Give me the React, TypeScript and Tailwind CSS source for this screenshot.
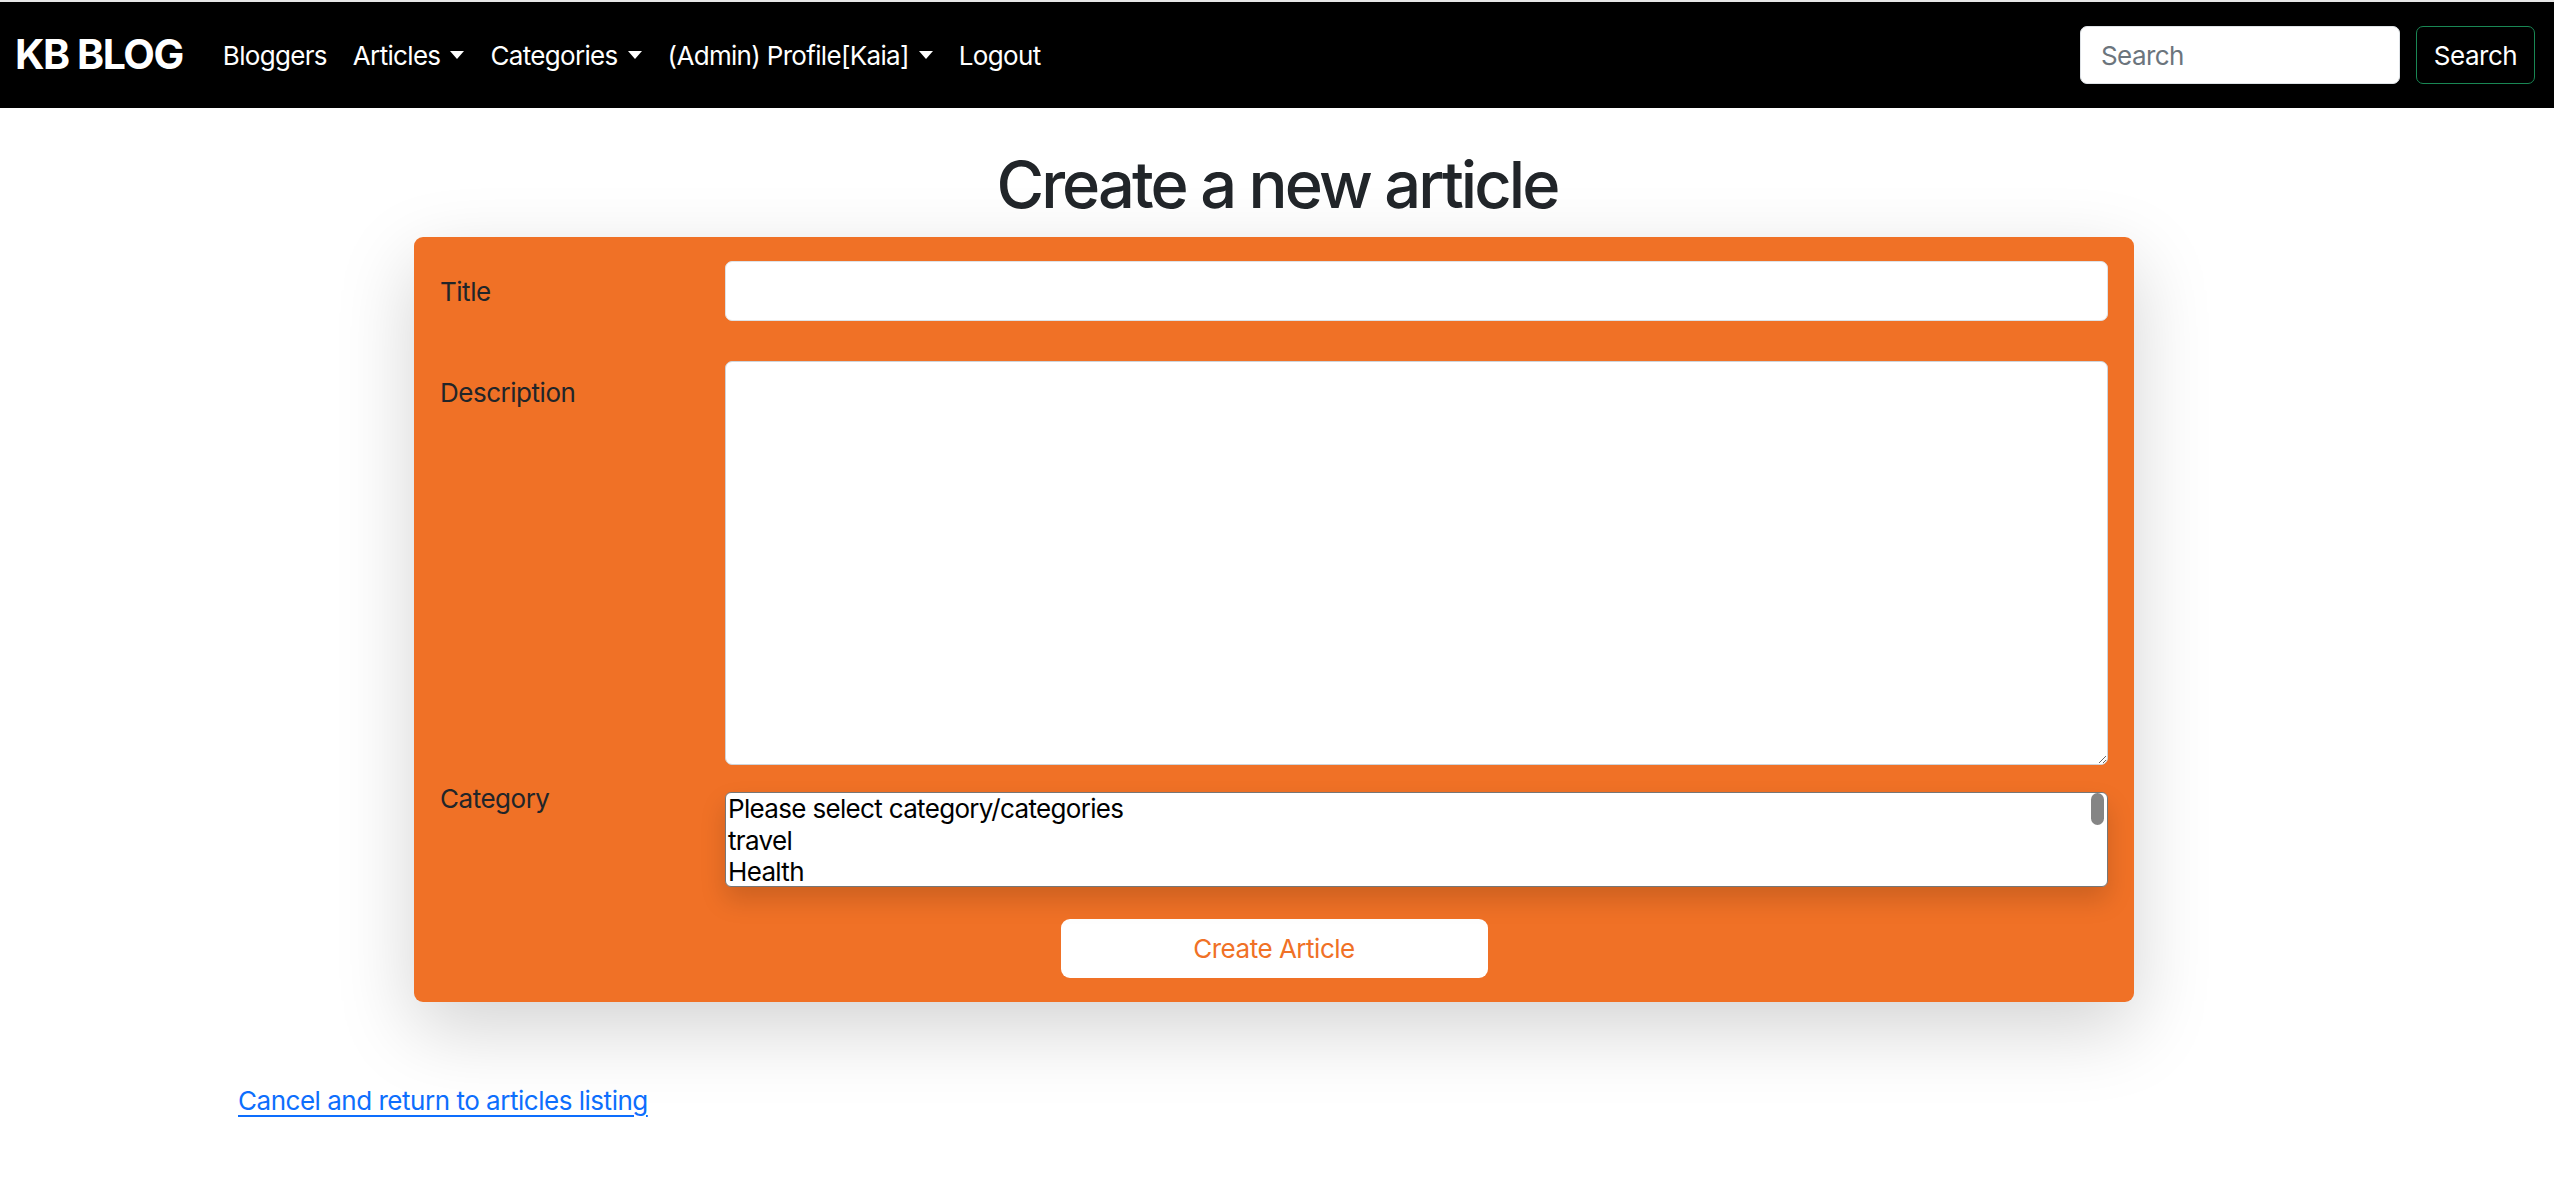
import React from "react";

const navLinks: { label: string; dropdown: boolean }[] = [
  { label: "Bloggers", dropdown: false },
  { label: "Articles", dropdown: true },
  { label: "Categories", dropdown: true },
  { label: "(Admin) Profile[Kaia]", dropdown: true },
  { label: "Logout", dropdown: false },
];

const categories = ["Please select category/categories", "travel", "Health"];

// small triangle like bootstrap's dropdown-toggle::after
const Caret = () => (
  <span className="ml-[10px] inline-block h-0 w-0 border-x-[7px] border-t-[8px] border-x-transparent border-t-white align-middle" />
);

const Navbar = () => {
  return (
    <nav className="flex h-[106px] items-center justify-between bg-black pl-[15px] pr-[19px]">
      <div className="flex items-center">
        <a className="mr-[27px] text-[41px] font-bold tracking-[-0.035em] text-white">
          KB BLOG
        </a>
        {navLinks.map((link) => (
          <a
            key={link.label}
            className="flex items-center px-[13px] text-[26px] leading-[39px] tracking-[-0.026em] text-white"
          >
            {link.label}
            {link.dropdown && <Caret />}
          </a>
        ))}
      </div>
      <form className="flex items-center gap-[16px]">
        <input
          type="search"
          placeholder="Search"
          className="h-[58px] w-[320px] rounded-[7px] border border-[#dee2e6] bg-white px-[20px] text-[26px] tracking-[-0.022em] text-[#212529] outline-none placeholder:text-[#6c757d]"
        />
        <button
          type="button"
          className="h-[58px] w-[119px] rounded-[7px] border-[1.6px] border-[#198754] text-[26px] text-white"
        >
          Search
        </button>
      </form>
    </nav>
  );
};

const ArticleForm = () => {
  return (
    <div className="ml-[414px] w-[1720px] rounded-[9px] bg-[#f07126] px-[26px] pb-[24px] pt-[24px] shadow-[0_26px_78px_rgba(0,0,0,0.175)]">
      {/* Title */}
      <div className="flex items-center">
        <label className="w-[285px] text-[26px] leading-[39px] text-[#212529]">
          Title
        </label>
        <input
          type="text"
          className="h-[60px] flex-1 rounded-[7px] border border-[#dee2e6] bg-white px-[20px] text-[26px] outline-none"
        />
      </div>

      {/* Description */}
      <div className="mt-[40px] flex items-start">
        <label className="w-[285px] pt-[12px] text-[26px] leading-[39px] text-[#212529]">
          Description
        </label>
        <textarea className="h-[404px] flex-1 resize-y rounded-[7px] border border-[#ced4da] bg-white px-[20px] py-[10px] text-[26px] outline-none" />
      </div>

      {/* Category */}
      <div className="mt-[14px] flex items-start">
        <label className="w-[285px] text-[26px] leading-[39px] text-[#212529]">
          Category
        </label>
        <div className="relative mt-[13px] h-[95px] flex-1 overflow-hidden rounded-[6px] border-[1.5px] border-[#767676] bg-white pl-[2px] tracking-[-0.042em] shadow-[0_13px_26px_rgba(0,0,0,0.15)]">
          {categories.map((c) => (
            <div key={c} className="text-[26px] leading-[31.5px] text-black">
              {c}
            </div>
          ))}
          <span className="absolute right-[3px] top-0 h-[32px] w-[13px] rounded-full bg-[#858585]" />
        </div>
      </div>

      <div className="mt-[32px] flex justify-center">
        <button
          type="button"
          className="h-[59px] w-[427px] rounded-[9px] bg-white text-[26px] text-[#f07126]"
        >
          Create Article
        </button>
      </div>
    </div>
  );
};

export default function App() {
  return (
    <div className="min-h-[1194px] w-full bg-white font-['Inter','Liberation_Sans',sans-serif] tracking-[-0.03em]">
      <div className="h-[2px] bg-[#e6e6e6]" />
      <Navbar />
      <h1 className="mb-[13px] mt-[38px] text-center text-[65px] font-medium leading-[1.2] tracking-[-0.045em] text-[#212529]">
        Create a new article
      </h1>
      <ArticleForm />
      <div className="ml-[238px] mt-[79px]">
        <a className="text-[26px] leading-[39px] text-[#0d6efd] underline underline-offset-[5px]">
          Cancel and return to articles listing
        </a>
      </div>
    </div>
  );
}
